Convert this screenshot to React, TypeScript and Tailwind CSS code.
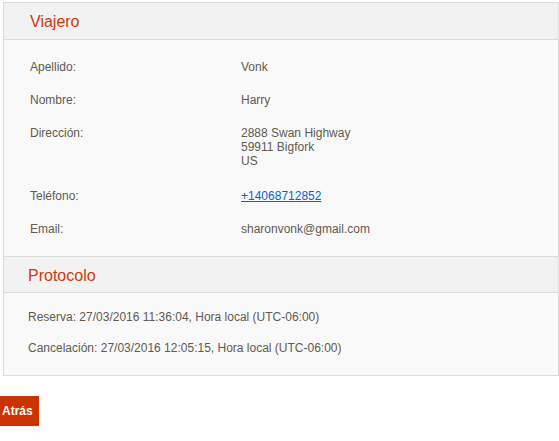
import React from "react";

const rows: { label: string; value: React.ReactNode; extra?: string }[] = [
  { label: "Apellido:", value: "Vonk" },
  { label: "Nombre:", value: "Harry" },
  {
    label: "Dirección:",
    value: (
      <>
        2888 Swan Highway
        <br />
        59911 Bigfork
        <br />
        US
      </>
    ),
    extra: "pb-[2px]",
  },
  {
    label: "Teléfono:",
    value: (
      <a href="#" className="text-[#0a63c9] underline">
        +14068712852
      </a>
    ),
  },
  { label: "Email:", value: "sharonvonk@gmail.com" },
];

export default function App() {
  return (
    <div
      className="bg-white w-[559px] h-[441px] pt-[2px] text-[12px] leading-[14px] text-[#625950]"
      style={{ fontFamily: '"Liberation Sans", Arial, sans-serif' }}
    >
      <div className="ml-[3px] border border-[#dcdcdc] bg-[#f9f9f9]">
        <div className="h-[37px] bg-[#f2f2f2] border-b border-[#dcdcdc] flex items-center pl-[26px] pt-[2px] text-[16px] leading-[18px] text-[#cc3a0c]">
          Viajero
        </div>
        <div className="pt-[20px] pb-[20px] pl-[26px] flex flex-col gap-[19px]">
          {rows.map((r) => (
            <div key={r.label} className={`grid grid-cols-[211px_1fr] ${r.extra ?? ""}`}>
              <div>{r.label}</div>
              <div>{r.value}</div>
            </div>
          ))}
        </div>
        <div className="h-[37px] bg-[#f2f2f2] border-y border-[#dcdcdc] flex items-center pl-[24px] pt-[2px] text-[16px] leading-[18px] text-[#cc3a0c]">
          Protocolo
        </div>
        <div className="pt-[17px] pb-[20px] pl-[24px] flex flex-col gap-[17px]">
          <div>Reserva: 27/03/2016 11:36:04, Hora local (UTC-06:00)</div>
          <div>Cancelación: 27/03/2016 12:05:15, Hora local (UTC-06:00)</div>
        </div>
      </div>
      <button className="mt-[20px] h-[30px] w-[39px] bg-[#cc3300] text-white font-bold text-[12px] text-left pl-[2px]">
        Atrás
      </button>
    </div>
  );
}
